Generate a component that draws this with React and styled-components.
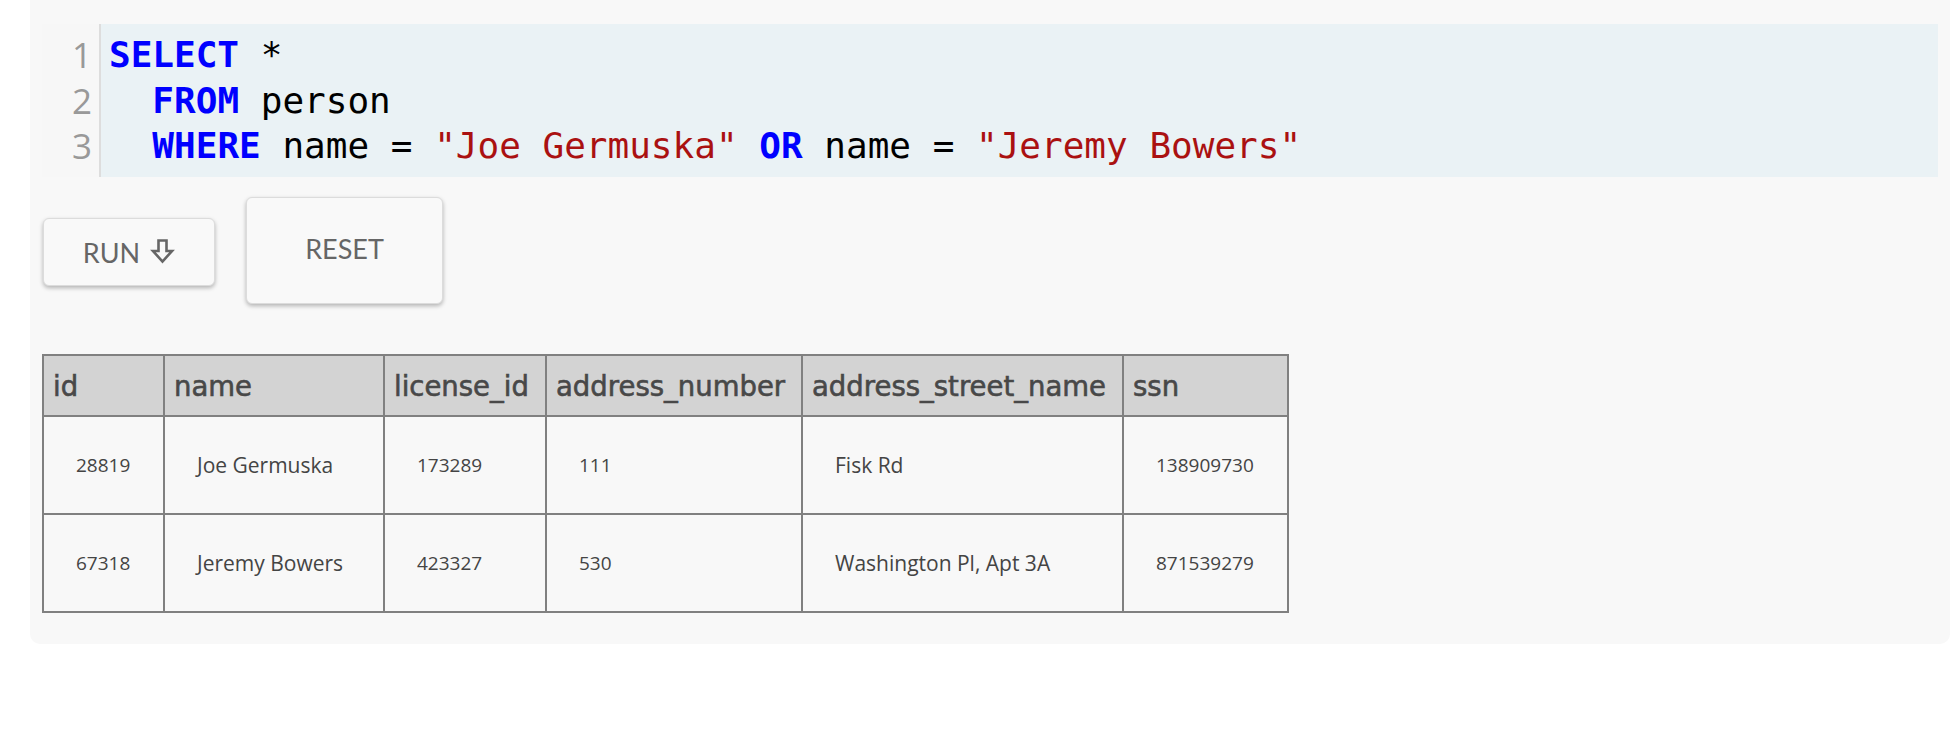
import React from 'react';
import styled, { createGlobalStyle } from 'styled-components';

const GlobalStyle = createGlobalStyle`
    body {
        margin: 0;
        background: #ffffff;
        font-family: "Open Sans", sans-serif;
    }
`;

const codeLines = [
    [{ t: 'kw', v: 'SELECT' }, { t: 'plain', v: ' *' }],
    [{ t: 'plain', v: '  ' }, { t: 'kw', v: 'FROM' }, { t: 'plain', v: ' person' }],
    [
        { t: 'plain', v: '  ' },
        { t: 'kw', v: 'WHERE' },
        { t: 'plain', v: ' name = ' },
        { t: 'str', v: '"Joe Germuska"' },
        { t: 'plain', v: ' ' },
        { t: 'kw', v: 'OR' },
        { t: 'plain', v: ' name = ' },
        { t: 'str', v: '"Jeremy Bowers"' },
    ],
];

const columns = [
    { name: 'id', width: 121 },
    { name: 'name', width: 220 },
    { name: 'license_id', width: 162 },
    { name: 'address_number', width: 256 },
    { name: 'address_street_name', width: 321 },
    { name: 'ssn', width: 165 },
];

const rows = [
    ['28819', 'Joe Germuska', '173289', '111', 'Fisk Rd', '138909730'],
    ['67318', 'Jeremy Bowers', '423327', '530', 'Washington Pl, Apt 3A', '871539279'],
];

const DownArrow = () => (
    <svg width="25" height="26" viewBox="0 0 25 26" fill="none">
        <path
            d="M8.5 2.5 H16.5 V13 H22 L12.5 23.5 L3 13 H8.5 Z"
            stroke="#666"
            strokeWidth="2.6"
            strokeLinejoin="miter"
        />
    </svg>
);

const App = () => {
    return (
        <>
            <GlobalStyle />
            <Panel>
                <Editor>
                    <Gutter>
                        {codeLines.map((_, i) => (
                            <LineNumber key={i}>{i + 1}</LineNumber>
                        ))}
                    </Gutter>
                    <Code>
                        {codeLines.map((line, i) => (
                            <CodeLine key={i}>
                                {line.map((tok, j) => (
                                    <Token key={j} kind={tok.t}>{tok.v}</Token>
                                ))}
                            </CodeLine>
                        ))}
                    </Code>
                </Editor>

                <ButtonRow>
                    <Button w={172} h={68}>
                        RUN <DownArrow />
                    </Button>
                    <Button w={197} h={107} lift>
                        RESET
                    </Button>
                </ButtonRow>

                <ResultTable>
                    <colgroup>
                        {columns.map((c) => (
                            <col key={c.name} style={{ width: c.width }} />
                        ))}
                    </colgroup>
                    <thead>
                        <tr>
                            {columns.map((c) => (
                                <HeadCell key={c.name}>{c.name}</HeadCell>
                            ))}
                        </tr>
                    </thead>
                    <tbody>
                        {rows.map((r, i) => (
                            <tr key={i}>
                                {r.map((v, j) => (
                                    <Cell key={j} numeric={/^\d+$/.test(v)}>{v}</Cell>
                                ))}
                            </tr>
                        ))}
                    </tbody>
                </ResultTable>
            </Panel>
        </>
    );
};

export default App;

// Styled Components
const Panel = styled.div`
    margin: 0 4px 0 30px;
    padding: 24px 12px 31px 12px;
    background: #f8f8f8;
    border-radius: 0 0 10px 10px;
`;

const Editor = styled.div`
    display: flex;
    background: #eaf2f5;
    height: 153px;
    box-sizing: border-box;
`;

const Gutter = styled.div`
    width: 59px;
    background: #f7f7f7;
    border-right: 2px solid #dddddd;
    padding: 8px 7px 8px 0;
    box-sizing: border-box;
    text-align: right;
`;

const LineNumber = styled.div`
    font-family: "Open Sans", sans-serif;
    font-size: 35px;
    line-height: 45.6px;
    height: 45.6px;
    color: #999999;
`;

const Code = styled.div`
    flex: 1;
    padding: 8px 8px;
`;

const CodeLine = styled.div`
    font-family: "DejaVu Sans Mono", monospace;
    font-size: 36px;
    line-height: 45.6px;
    height: 45.6px;
    white-space: pre;
    color: #000000;
`;

const Token = styled.span`
    color: ${(p) => (p.kind === 'kw' ? '#0000ff' : p.kind === 'str' ? '#aa1111' : '#000000')};
    font-weight: ${(p) => (p.kind === 'kw' ? 700 : 400)};
`;

const ButtonRow = styled.div`
    display: flex;
    align-items: center;
    gap: 31px;
    margin: 20px 0 0 1px;
`;

const Button = styled.button`
    width: ${(p) => p.w}px;
    height: ${(p) => p.h}px;
    margin-top: ${(p) => (p.lift ? '0' : '3px')};
    display: flex;
    align-items: center;
    justify-content: center;
    gap: 10px;
    padding: 0 0 ${(p) => (p.lift ? '4px' : '0')} 0;
    background: #f9f9f9;
    border: 1px solid #dcdcdc;
    border-radius: 6px;
    box-shadow: 0 2px 4px rgba(0, 0, 0, 0.28);
    font-family: "Lato", sans-serif;
    font-size: 27px;
    color: #666666;
    cursor: pointer;

    svg {
        margin-bottom: 2px;
    }
`;

const ResultTable = styled.table`
    margin-top: 50px;
    border-collapse: collapse;
    table-layout: fixed;
    width: 1245px;
`;

const HeadCell = styled.th`
    height: 59px;
    padding: 0 9px;
    background: #d3d3d3;
    border: 2px solid #808080;
    text-align: left;
    font-family: "DejaVu Sans", sans-serif;
    font-weight: 400;
    font-size: 27.5px;
    color: #484848;
    -webkit-text-stroke: 0.6px #484848;
    white-space: nowrap;
`;

const Cell = styled.td`
    height: 96px;
    padding: 0 0 0 32px;
    border: 2px solid #808080;
    text-align: left;
    font-family: "Open Sans", sans-serif;
    font-size: ${(p) => (p.numeric ? '19px' : '21px')};
    color: #444444;
    white-space: nowrap;
`;
